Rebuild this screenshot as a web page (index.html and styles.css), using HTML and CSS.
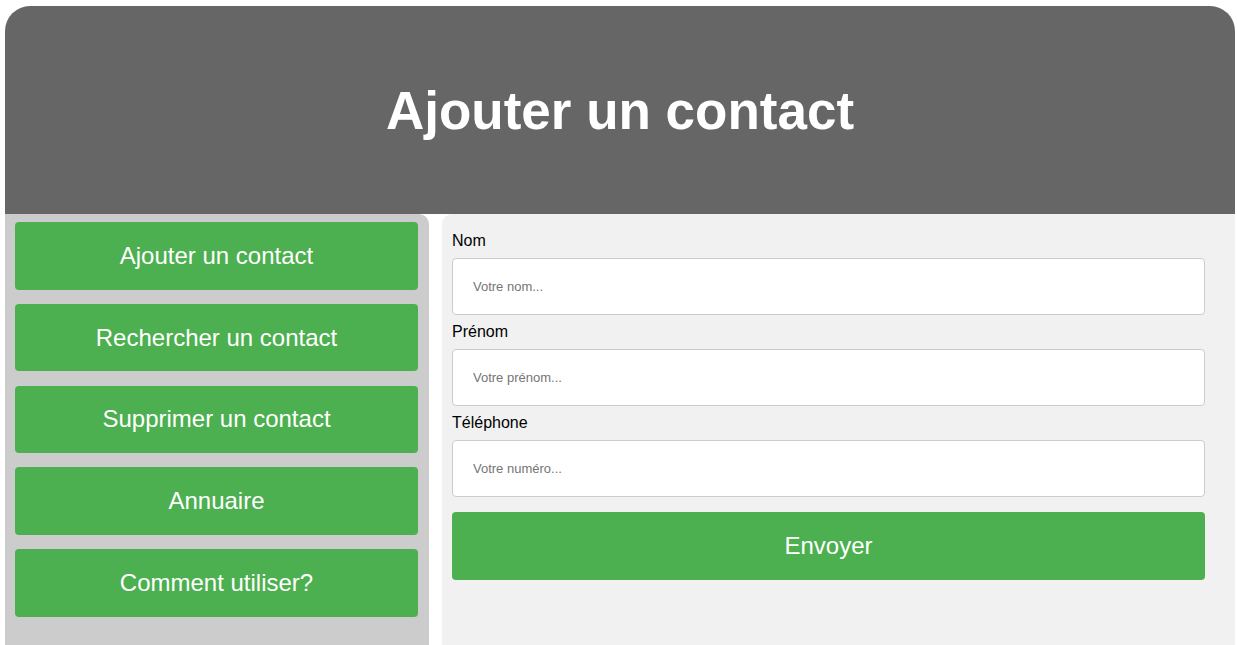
FILE: index.html
```html
<!DOCTYPE html>
<html lang="fr">
<head>
<meta charset="utf-8">
<title>Ajouter un contact</title>
<link rel="stylesheet" href="styles.css">
</head>
<body>
<header class="header">
  <h1 class="title">Ajouter un contact</h1>
</header>
<div class="content">
  <nav class="sidebar">
    <a class="nav-btn" href="#">Ajouter un contact</a>
    <a class="nav-btn" href="#">Rechercher un contact</a>
    <a class="nav-btn" href="#">Supprimer un contact</a>
    <a class="nav-btn" href="#">Annuaire</a>
    <a class="nav-btn" href="#">Comment utiliser?</a>
  </nav>
  <main class="main">
    <form class="form">
      <label class="label" for="nom">Nom</label>
      <input class="input" id="nom" type="text" placeholder="Votre nom...">
      <label class="label" for="prenom">Prénom</label>
      <input class="input" id="prenom" type="text" placeholder="Votre prénom...">
      <label class="label" for="tel">Téléphone</label>
      <input class="input" id="tel" type="text" placeholder="Votre numéro...">
      <button class="submit" type="button">Envoyer</button>
    </form>
  </main>
</div>
</body>
</html>
```
FILE: styles.css
```css
html, body {
  background: #ffffff;
}
body {
  margin: 6px 2px 0 5px;
  font-family: "Liberation Sans", Arial, sans-serif;
  overflow: hidden;
}
.header {
  height: 208px;
  background: #666666;
  border-radius: 25px 25px 0 0;
  display: flex;
  align-items: center;
  justify-content: center;
}
.title {
  margin: 0;
  color: #ffffff;
  font-size: 53px;
  font-weight: bold;
}
.content {
  display: flex;
  gap: 13px;
  min-height: 480px;
}
.sidebar {
  width: 424px;
  box-sizing: border-box;
  background: #cccccc;
  border-radius: 0 10px 0 0;
  padding: 8px 11px 8px 10px;
  display: flex;
  flex-direction: column;
  gap: 14.2px;
}
.nav-btn {
  display: flex;
  align-items: center;
  justify-content: center;
  height: 67.6px;
  background: #4caf50;
  color: #ffffff;
  text-decoration: none;
  font-size: 24px;
  border-radius: 4px;
}
.main {
  flex: 1;
  background: #f1f1f1;
  border-radius: 10px 0 0 0;
  padding: 10px 30px 0 10px;
}
.form {
  display: flex;
  flex-direction: column;
}
.label {
  display: block;
  font-size: 16px;
  line-height: 18px;
  margin: 8px 0;
  color: #000000;
}
.input {
  height: 57px;
  box-sizing: border-box;
  border: 1px solid #cccccc;
  border-radius: 4px;
  padding: 0 20px;
  background: #ffffff;
  font-family: "Liberation Sans", Arial, sans-serif;
  font-size: 13px;
}
.input::placeholder {
  color: #757575;
}
.submit {
  margin-top: 15px;
  height: 68px;
  border: none;
  border-radius: 4px;
  background: #4caf50;
  color: #ffffff;
  font-family: "Liberation Sans", Arial, sans-serif;
  font-size: 24px;
}
```
